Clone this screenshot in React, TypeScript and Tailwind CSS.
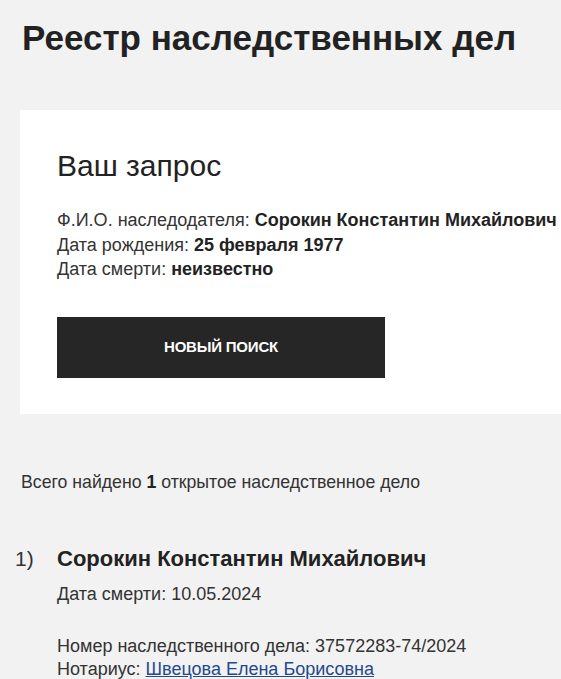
export default function App() {
  return (
    <div
      className="min-h-[679px] w-full overflow-hidden bg-[#f2f2f2] text-[#222222]"
      style={{ fontFamily: '"Liberation Sans", Arial, sans-serif' }}
    >
      <h1 className="pl-[22px] pt-[17px] text-[35px] font-bold leading-[42px]">
        Реестр наследственных дел
      </h1>

      <div className="ml-[20px] mt-[51px] w-[620px] bg-white pb-[36px] pl-[37px] pt-[39px]">
        <h2 className="text-[30px] font-normal leading-[34px]">Ваш запрос</h2>
        <div className="mt-[25px] text-[18px] leading-[24.5px] text-[#333333]">
          <p>
            Ф.И.О. наследодателя: <b className="text-[#222222]">Сорокин Константин Михайлович</b>
          </p>
          <p>
            Дата рождения: <b className="text-[#222222]">25 февраля 1977</b>
          </p>
          <p>
            Дата смерти: <b className="text-[#222222]">неизвестно</b>
          </p>
        </div>
        <button className="mt-[35px] flex h-[61px] w-[328px] items-center justify-center bg-[#262626] text-[15px] font-bold uppercase tracking-[-0.2px] text-white">
          Новый поиск
        </button>
      </div>

      <p className="mt-[56px] pl-[21px] text-[17.7px] leading-[24px] text-[#333333]">
        Всего найдено <b className="text-[#222222]">1</b> открытое наследственное дело
      </p>

      <div className="mt-[50px] flex">
        <span className="w-[57px] pl-[15px] text-[21px] leading-[30px] text-[#333333]">1)</span>
        <div className="flex-1 text-[#333333]">
          <h3 className="text-[22px] font-bold leading-[30px] text-[#222222]">Сорокин Константин Михайлович</h3>
          <p className="mt-[8px] text-[18px] leading-[24px]">Дата смерти: 10.05.2024</p>
          <p className="mt-[28px] text-[18px] leading-[24px]">
            Номер наследственного дела: 37572283-74/2024
          </p>
          <p className="text-[18px] leading-[22px]">
            Нотариус:{' '}
            <a href="#" className="text-[#1f4a8c] underline">
              Швецова Елена Борисовна
            </a>
          </p>
        </div>
      </div>
    </div>
  );
}
